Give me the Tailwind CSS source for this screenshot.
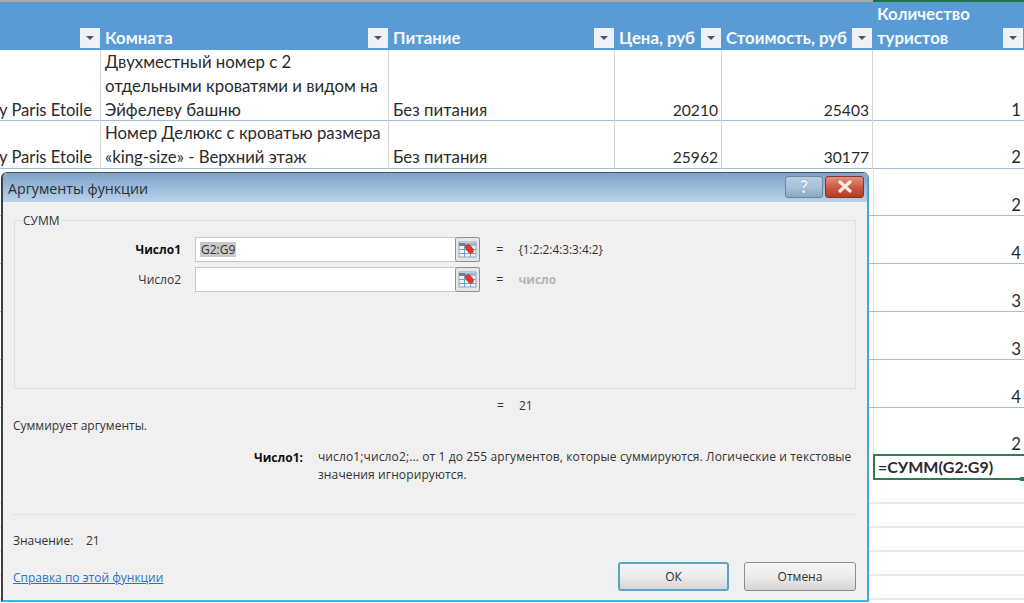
<!DOCTYPE html>
<html lang="ru">
<head>
<meta charset="UTF-8">
<title>Аргументы функции</title>
<script src="https://cdn.jsdelivr.net/npm/@tailwindcss/browser@4"></script>
</head>
<body class="relative w-[1024px] h-[603px] overflow-hidden bg-white font-['Lato','Noto_Sans',sans-serif] text-[16.8px] leading-[24px] text-[#2b2b2b]">

  <!-- sheet -->
  <div class="flex flex-col">
    <div class="h-[2px] flex">
      <div class="w-[873px] bg-[#a9a9a9]"></div>
      <div class="flex-1 bg-[#217346]"></div>
    </div>
    <div class="h-[48px] grid grid-cols-[101px_288px_226px_107px_151px_151px] bg-[#5b9bd5] font-bold text-[#f4f8fc]">
      <div class="flex items-end justify-end pb-[3px] pr-[1px]"><span class="size-[20px] bg-[#eef1f6] flex items-center justify-center"><span class="border-x-[4px] border-t-[4px] border-x-transparent border-t-[#555]"></span></span></div>
      <div class="flex items-end justify-between pl-[4px] pr-[1px]"><span class="mb-[1px]">Комната</span><span class="size-[20px] mb-[3px] bg-[#eef1f6] flex items-center justify-center"><span class="border-x-[4px] border-t-[4px] border-x-transparent border-t-[#555]"></span></span></div>
      <div class="flex items-end justify-between pl-[4px] pr-[1px]"><span class="mb-[1px]">Питание</span><span class="size-[20px] mb-[3px] bg-[#eef1f6] flex items-center justify-center"><span class="border-x-[4px] border-t-[4px] border-x-transparent border-t-[#555]"></span></span></div>
      <div class="flex items-end justify-between pl-[4px] pr-[1px]"><span class="mb-[1px]">Цена, руб</span><span class="size-[20px] mb-[3px] bg-[#eef1f6] flex items-center justify-center"><span class="border-x-[4px] border-t-[4px] border-x-transparent border-t-[#555]"></span></span></div>
      <div class="flex items-end justify-between pl-[4px] pr-[1px]"><span class="mb-[1px]">Стоимость, руб</span><span class="size-[20px] mb-[3px] bg-[#eef1f6] flex items-center justify-center"><span class="border-x-[4px] border-t-[4px] border-x-transparent border-t-[#555]"></span></span></div>
      <div class="flex items-end justify-between pl-[4px] pr-[1px]"><span class="mb-[1px]">Количество<br>туристов</span><span class="size-[20px] mb-[3px] bg-[#eef1f6] flex items-center justify-center"><span class="border-x-[4px] border-t-[4px] border-x-transparent border-t-[#555]"></span></span></div>
    </div>

    <div class="h-[71px] grid grid-cols-[101px_288px_226px_107px_151px_151px] border-b border-[#9dbfd0]">
      <div class="flex items-end justify-end whitespace-nowrap pr-[8px] text-[16.6px] border-r border-[#d4d4d4]">y Paris Etoile</div>
      <div class="flex items-end pl-[4px] border-r border-[#d4d4d4]"><span>Двухместный номер с 2<br>отдельными кроватями и видом на<br>Эйфелеву башню</span></div>
      <div class="flex items-end pl-[4px] border-r border-[#d4d4d4]">Без питания</div>
      <div class="flex items-end justify-end pr-[3px] text-[15.6px] border-r border-[#d4d4d4]">20210</div>
      <div class="flex items-end justify-end pr-[3px] text-[15.6px] border-r border-[#d4d4d4]">25403</div>
      <div class="flex items-end justify-end pr-[3px]">1</div>
    </div>
    <div class="h-[48px] grid grid-cols-[101px_288px_226px_107px_151px_151px] border-b border-[#9dbfd0]">
      <div class="flex items-end justify-end whitespace-nowrap pr-[8px] text-[16.6px] border-r border-[#d4d4d4]">y Paris Etoile</div>
      <div class="flex items-end pl-[4px] border-r border-[#d4d4d4]"><span>Номер Делюкс с кроватью размера<br>«king-size» - Верхний этаж</span></div>
      <div class="flex items-end pl-[4px] border-r border-[#d4d4d4]">Без питания</div>
      <div class="flex items-end justify-end pr-[3px] text-[15.6px] border-r border-[#d4d4d4]">25962</div>
      <div class="flex items-end justify-end pr-[3px] text-[15.6px] border-r border-[#d4d4d4]">30177</div>
      <div class="flex items-end justify-end pr-[3px]">2</div>
    </div>

    <!-- rows behind the dialog: only the last column shows -->
    <div class="h-[47px] flex justify-end border-b border-[#9dbfd0]"><div class="w-[151px] flex items-end justify-end pr-[3px] leading-[21px] border-l border-[#e4e4e4]">2</div></div>
    <div class="h-[48px] flex justify-end border-b border-[#9dbfd0]"><div class="w-[151px] flex items-end justify-end pr-[3px] leading-[21px] border-l border-[#e4e4e4]">4</div></div>
    <div class="h-[48px] flex justify-end border-b border-[#9dbfd0]"><div class="w-[151px] flex items-end justify-end pr-[3px] leading-[21px] border-l border-[#e4e4e4]">3</div></div>
    <div class="h-[48px] flex justify-end border-b border-[#9dbfd0]"><div class="w-[151px] flex items-end justify-end pr-[3px] leading-[21px] border-l border-[#e4e4e4]">3</div></div>
    <div class="h-[48px] flex justify-end border-b border-[#9dbfd0]"><div class="w-[151px] flex items-end justify-end pr-[3px] leading-[21px] border-l border-[#e4e4e4]">4</div></div>
    <div class="h-[46px] flex justify-end"><div class="w-[151px] flex items-end justify-end pr-[3px] leading-[20px] border-l border-[#e4e4e4]">2</div></div>

    <div class="h-[26px] flex justify-end">
      <div class="relative w-[151px] border-2 border-r-0 border-[#2e7d57] pl-[3px] font-bold text-[16px] leading-[22px]">=СУММ(G2:G9)
        <span class="absolute right-0 -bottom-[3px] size-[4px] bg-[#2e7d57]"></span>
      </div>
    </div>
    <div class="h-[24px] border-b-2 border-[#e8e8e8]"></div>
    <div class="h-[24px] border-b-2 border-[#e8e8e8]"></div>
    <div class="h-[24px] border-b-2 border-[#e8e8e8]"></div>
    <div class="h-[24px] border-b-2 border-[#e8e8e8]"></div>
    <div class="h-[24px] border-b-2 border-[#e8e8e8]"></div>
  </div>

  <!-- dialog window -->
  <div class="absolute left-[1px] top-[172px] w-[868px] h-[430px] flex flex-col rounded-t-[6px] border-x-2 border-t border-b-2 border-l-[#3a3f45] border-t-[#4a5560] border-r-[#4aa3d6] border-b-[#3fb4da] bg-[#f0f0f0] font-['Open_Sans','Noto_Sans',sans-serif] text-[12px] leading-[15px] text-[#333]">
    <div class="h-[29px] shrink-0 flex items-center justify-between pl-[5px] pr-[3px] rounded-t-[5px] bg-gradient-to-b from-[#7fa3c9] to-[#b9d2ea]">
      <span class="mt-[2px] text-[14.2px] text-[#2a2f36]">Аргументы функции</span>
      <div class="flex gap-[2px] mb-[2px]">
        <div class="w-[38px] h-[22px] rounded-[3px] border border-[#6d87a0] bg-gradient-to-b from-[#b5cde3] via-[#a9c3da] to-[#8aa8c2] flex items-center justify-center font-bold text-[17px] text-[#eef3f7] [text-shadow:0_0_1px_#44586c]">?</div>
        <div class="w-[39px] h-[22px] rounded-[3px] border border-[#7b3a32] bg-gradient-to-b from-[#e2907f] via-[#cf5a43] to-[#b93a23] flex items-center justify-center">
          <svg width="16" height="13" viewBox="0 0 16 13"><path d="M3 2l10 9M13 2L3 11" stroke="#f4ece8" stroke-width="3.2" stroke-linecap="round"/></svg>
        </div>
      </div>
    </div>

    <div class="flex-1 flex flex-col pl-[10px] pr-[11px]">
      <!-- group box -->
      <fieldset class="ml-[1px] mt-[11px] h-[176px] border border-[#e0e0e0] pl-[8px] pr-[1px]">
        <legend class="-ml-[1px] px-[1px] leading-[15px]">СУММ</legend>
        <div class="mt-[9px] flex items-center h-[25px]">
          <span class="w-[158px] text-right font-bold text-[#111]">Число1</span>
          <div class="ml-[14px] w-[285px] h-[25px] flex border border-[#c8c8c8] bg-white items-center pl-[4px]">
            <span class="bg-[#c9c9c9] px-[1px]">G2:G9</span>
            <svg class="ml-auto -mr-[1px] shrink-0" width="25" height="25" viewBox="0 0 25 25"><rect x=".5" y=".5" width="24" height="24" rx="2" fill="#e6e6e6" stroke="#8f8f8f"/><rect x="4" y="5" width="17" height="15" fill="#eef4fa" stroke="#8fa7bd"/><path d="M4 6h6v3H4z" fill="#6f7f90"/><path d="M10 6h11v3H10z" fill="#9fb6cb"/><path d="M4 12.5h17M4 16.5h17M9.5 9v11M15.5 9v11" stroke="#6f9fcb"/><path d="M10 8l4-1 3 3 2 3-1 3-3 1-3-3-2-3z" fill="#d8392b"/></svg>
          </div>
          <span class="ml-[16px] text-[13px]">=</span>
          <span class="ml-[15px] text-[11.8px]">{1:2:2:4:3:3:4:2}</span>
        </div>
        <div class="mt-[5px] flex items-center h-[25px]">
          <span class="w-[158px] text-right">Число2</span>
          <div class="ml-[14px] w-[285px] h-[25px] flex border border-[#c8c8c8] bg-white items-center">
            <svg class="ml-auto -mr-[1px] shrink-0" width="25" height="25" viewBox="0 0 25 25"><rect x=".5" y=".5" width="24" height="24" rx="2" fill="#e6e6e6" stroke="#8f8f8f"/><rect x="4" y="5" width="17" height="15" fill="#eef4fa" stroke="#8fa7bd"/><path d="M4 6h6v3H4z" fill="#6f7f90"/><path d="M10 6h11v3H10z" fill="#9fb6cb"/><path d="M4 12.5h17M4 16.5h17M9.5 9v11M15.5 9v11" stroke="#6f9fcb"/><path d="M10 8l4-1 3 3 2 3-1 3-3 1-3-3-2-3z" fill="#d8392b"/></svg>
          </div>
          <span class="ml-[16px] text-[13px]">=</span>
          <span class="ml-[15px] font-bold text-[#b4b4b4]">число</span>
        </div>
      </fieldset>

      <div class="mt-[9px] flex h-[15px] pl-[484px]"><span class="w-[22px]">=</span><span>21</span></div>
      <div class="mt-[5px]">Суммирует аргументы.</div>
      <div class="mt-[17px] h-[36px] flex">
        <span class="w-[291px] text-right font-bold text-[#111]">Число1:</span>
        <p class="ml-[15px] -mt-[2px] w-[540px] leading-[18px] tracking-[0.12px]">число1;число2;... от 1 до 255 аргументов, которые суммируются. Логические и текстовые значения игнорируются.</p>
      </div>
      <div class="mt-[28px] border-t border-[#e2e2e2]"></div>
      <div class="mt-[18px] flex"><span class="w-[73px]">Значение:</span><span>21</span></div>
      <div class="flex-1 flex items-start justify-between mt-[14px]">
        <a class="mt-[8px] text-[#2f74b8] underline">Справка по этой функции</a>
        <div class="flex gap-[15px]">
          <button class="w-[111px] h-[29px] rounded-[3px] border-2 border-[#5aa5c4] bg-gradient-to-b from-[#f4f4f4] via-[#ececec] to-[#d5d5d5]">ОК</button>
          <button class="w-[112px] h-[29px] rounded-[3px] border border-[#8e8e8e] bg-gradient-to-b from-[#f4f4f4] via-[#ececec] to-[#d5d5d5]">Отмена</button>
        </div>
      </div>
    </div>
  </div>
</body>
</html>
